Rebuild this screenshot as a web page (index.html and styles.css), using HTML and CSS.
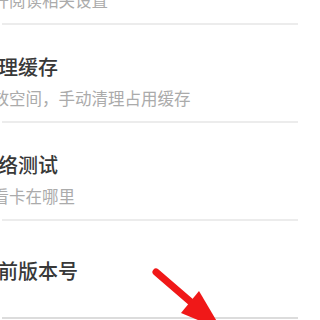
FILE: index.html
```html
<!DOCTYPE html>
<html lang="zh-CN">
<head>
<meta charset="utf-8">
<title>设置</title>
<link rel="stylesheet" href="styles.css">
</head>
<body>
<div class="list">
  <div class="row">
    <div class="title">阅读设置</div>
    <div class="sub">打开阅读相关设置</div>
  </div>
  <div class="row">
    <div class="title">清理缓存</div>
    <div class="sub">释放空间，手动清理占用缓存</div>
  </div>
  <div class="row">
    <div class="title">网络测试</div>
    <div class="sub">查看卡在哪里</div>
  </div>
  <div class="row row-single">
    <div class="title">当前版本号</div>
  </div>
</div>
<svg class="arrow" width="300" height="320" viewBox="0 0 300 320" aria-hidden="true">
  <line x1="156" y1="272" x2="192" y2="303" stroke="#f01818" stroke-width="7" stroke-linecap="round"/>
  <polygon points="181,313 199,291 222,330" fill="#f01818"/>
</svg>
</body>
</html>
```
FILE: styles.css
```css
html, body {
  margin: 0;
  padding: 0;
  background: #ffffff;
  overflow: hidden;
  width: 300px;
  height: 320px;
}
body {
  position: relative;
  font-family: "Noto Sans CJK SC", "Noto Sans", sans-serif;
}
.list {
  margin: -73px 2px 0;
}
.row {
  height: 96px;
  box-sizing: content-box;
  padding: 0;
  border-bottom: 2px solid #ececec;
  display: flex;
  flex-direction: column;
}
.title {
  margin: 31px 0 0 -24px;
  font-size: 20px;
  line-height: 22px;
  color: #383838;
  font-weight: 500;
  white-space: nowrap;
}
.sub {
  margin: 10px 0 0 -26px;
  font-size: 16.5px;
  line-height: 20px;
  color: #ababab;
  white-space: nowrap;
}
.row-single .title {
  margin-top: 39px;
}
.row-single {
  border-bottom-color: #dcdcdc;
}
.arrow {
  position: absolute;
  left: 0;
  top: 0;
  pointer-events: none;
}
```
